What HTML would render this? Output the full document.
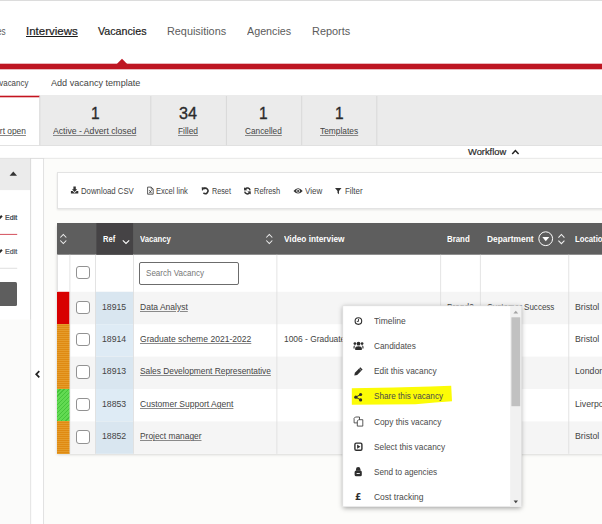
<!DOCTYPE html>
<html lang="en"><head><meta charset="utf-8"><title>Vacancies</title><style>
html,body{margin:0;padding:0;}
body{width:602px;height:524px;overflow:hidden;position:relative;background:#fff;font-family:"Liberation Sans",sans-serif;}
.a{position:absolute;}
.t{position:absolute;white-space:pre;line-height:1;transform-origin:0 0;}
svg{position:absolute;overflow:visible;}
</style></head>
<body>
<svg style="left:0;top:0" width="602" height="524"><rect x="0" y="0" width="602" height="1" fill="#dcdcdc"/><rect x="0" y="63.7" width="602" height="5.6" fill="#be1622"/><polygon points="116.8,64 122,58.8 127.2,64" fill="#be1622"/><rect x="0" y="95" width="602" height="50.5" fill="#ebebeb"/><rect x="0" y="95" width="39.4" height="50.5" fill="#fff"/><rect x="0" y="145.1" width="602" height="0.8" fill="#dcdcdc"/><rect x="0" y="95.7" width="39.7" height="1.6" fill="#c4141f"/><rect x="39.4" y="96" width="0.9" height="49.2" fill="#d6d6d6"/><rect x="150.4" y="96" width="0.9" height="49.2" fill="#d6d6d6"/><rect x="225.9" y="96" width="0.9" height="49.2" fill="#d6d6d6"/><rect x="301.3" y="96" width="0.9" height="49.2" fill="#d6d6d6"/><rect x="376.4" y="96" width="0.9" height="49.2" fill="#d6d6d6"/><rect x="0" y="157.9" width="602" height="0.9" fill="#d9d9d9"/><rect x="0" y="158.6" width="30.5" height="31.5" fill="#ebebeb"/><rect x="30.2" y="158" width="0.9" height="366" fill="#d6d6d6"/><rect x="0" y="319.5" width="30.3" height="205" fill="#fbfbfa"/><rect x="43.3" y="158.6" width="0.9" height="366" fill="#d6d6d6"/><rect x="44.2" y="158.6" width="558" height="366" fill="#fcfcfa"/><polygon points="9.6,175.8 13.3,171.6 17,175.8" fill="#333"/><path d="M39.3 371.1 L36.2 374.2 L39.3 377.3" fill="none" stroke="#222" stroke-width="1.7"/><rect x="0" y="233.9" width="17.2" height="1" fill="#d4505c"/><rect x="0" y="267.8" width="17.2" height="0.9" fill="#dcdcdc"/></svg>
<div class="a" style="left:0px;top:282px;width:17.2px;height:24px;background:#5e5e5e;border-radius:0 1.5px 1.5px 0;"></div>
<div class="a" style="left:57.4px;top:172.2px;width:560px;height:36.9px;background:#fff;border:1px solid #e3e3e3;box-sizing:border-box;box-shadow:0 1px 2px rgba(0,0,0,0.10);"></div>
<div class="a" style="left:57px;top:223px;width:560px;height:230px;background:#fff;box-shadow:0 1.5px 3px rgba(0,0,0,0.18);"></div>
<svg style="left:0;top:0" width="602" height="524"><rect x="57" y="223" width="560" height="230.8" fill="#fff"/><rect x="57" y="223" width="560" height="31.7" fill="#5e5e5e"/><rect x="96.4" y="223" width="36.7" height="31.7" fill="#454345"/><rect x="57" y="291.8" width="560" height="32.4" fill="#f5f5f5"/><rect x="95.6" y="291.8" width="37.6" height="32.4" fill="#d9e6f0"/><rect x="95.6" y="324.2" width="37.6" height="32.4" fill="#deebf5"/><rect x="57" y="356.6" width="560" height="32.4" fill="#f5f5f5"/><rect x="95.6" y="356.6" width="37.6" height="32.4" fill="#d9e6f0"/><rect x="95.6" y="389.0" width="37.6" height="32.4" fill="#deebf5"/><rect x="57" y="421.4" width="560" height="32.4" fill="#f5f5f5"/><rect x="95.6" y="421.4" width="37.6" height="32.4" fill="#d9e6f0"/><rect x="57" y="291.8" width="12.5" height="32.4" fill="#d80000"/></svg>
<div class="a" style="left:57px;top:324.2px;width:12.5px;height:64.8px;background:repeating-linear-gradient(180deg,#e59c2b 0,#e59c2b 1px,#df8a12 1px,#df8a12 2px);"></div>
<div class="a" style="left:57px;top:389.0px;width:12.5px;height:32.4px;background:repeating-linear-gradient(135deg,#62da52 0,#62da52 2px,#45c43a 2px,#45c43a 2.9px);"></div>
<div class="a" style="left:57px;top:421.4px;width:12.5px;height:32.4px;background:repeating-linear-gradient(180deg,#e59c2b 0,#e59c2b 1px,#df8a12 1px,#df8a12 2px);"></div>
<svg style="left:0;top:0" width="602" height="524"><rect x="69.5" y="254.7" width="0.8" height="199.10000000000002" fill="#dddddd"/><rect x="95.2" y="254.7" width="0.8" height="199.10000000000002" fill="#dddddd"/><rect x="133.2" y="254.7" width="0.8" height="199.10000000000002" fill="#dddddd"/><rect x="276.5" y="254.7" width="0.8" height="199.10000000000002" fill="#dddddd"/><rect x="440.3" y="254.7" width="0.8" height="199.10000000000002" fill="#dddddd"/><rect x="479.9" y="254.7" width="0.8" height="199.10000000000002" fill="#dddddd"/><rect x="568.4" y="254.7" width="0.8" height="199.10000000000002" fill="#dddddd"/><rect x="57" y="254.7" width="0.8" height="37.10000000000001" fill="#dddddd"/></svg>
<div class="a" style="left:76px;top:265.9px;width:13.6px;height:13.6px;background:#fff;border:1.2px solid #929292;border-radius:3px;box-sizing:border-box;"></div>
<div class="a" style="left:76px;top:300.5px;width:13.6px;height:13.6px;background:#fff;border:1.2px solid #929292;border-radius:3px;box-sizing:border-box;"></div>
<div class="a" style="left:76px;top:332.9px;width:13.6px;height:13.6px;background:#fff;border:1.2px solid #929292;border-radius:3px;box-sizing:border-box;"></div>
<div class="a" style="left:76px;top:365.3px;width:13.6px;height:13.6px;background:#fff;border:1.2px solid #929292;border-radius:3px;box-sizing:border-box;"></div>
<div class="a" style="left:76px;top:397.7px;width:13.6px;height:13.6px;background:#fff;border:1.2px solid #929292;border-radius:3px;box-sizing:border-box;"></div>
<div class="a" style="left:76px;top:430.09999999999997px;width:13.6px;height:13.6px;background:#fff;border:1.2px solid #929292;border-radius:3px;box-sizing:border-box;"></div>
<div class="a" style="left:139px;top:262px;width:99.8px;height:23.2px;background:#fff;border:1.1px solid #6c6c6c;border-radius:2px;box-sizing:border-box;"></div>
<svg style="left:0;top:0" width="602" height="524"><path d="M60.3 237.5 L63.3 234.4 L66.3 237.5 M60.3 240.5 L63.3 243.6 L66.3 240.5" fill="none" stroke="#f0f0f0" stroke-width="1.05" stroke-linecap="butt" stroke-linejoin="miter"/><path d="M266.3 237.5 L269.3 234.4 L272.3 237.5 M266.3 240.5 L269.3 243.6 L272.3 240.5" fill="none" stroke="#f0f0f0" stroke-width="1.05" stroke-linecap="butt" stroke-linejoin="miter"/><path d="M558.4 237.6 L561.4 234.5 L564.4 237.6 M558.4 240.6 L561.4 243.7 L564.4 240.6" fill="none" stroke="#f0f0f0" stroke-width="1.05" stroke-linecap="butt" stroke-linejoin="miter"/><path d="M122.8 240.4 L126 243.5 L129.2 240.4" fill="none" stroke="#fff" stroke-width="1.05"/><circle cx="545.7" cy="238.7" r="6.9" fill="none" stroke="#fff" stroke-width="1"/><polygon points="542.3,237.1 549.3,237.1 545.8,241.2" fill="#fff"/><path d="M512.2 154 L515.4 150.6 L518.6 154" fill="none" stroke="#222" stroke-width="1.5"/><path d="M73.4 186.6h2.4v2.6h1.5l-2.7 2.8l-2.7-2.8h1.5z M70.9 191h1.7l2 1.9l2-1.9h1.7v2.4h-7.4z" fill="#333"/><path d="M147.6 187.1h3.6l2 2v5.1h-5.6z" fill="none" stroke="#333" stroke-width="0.8"/><path d="M151.2 187.1v2h2" fill="none" stroke="#333" stroke-width="0.6"/><path d="M149.2 190.2l2.4 3M151.6 190.2l-2.4 3" stroke="#333" stroke-width="0.85"/><path d="M203.5 188.9 A2.7 2.7 0 1 1 203.4 192.9" fill="none" stroke="#333" stroke-width="1.5"/><polygon points="201.7,187.2 205.4,187.4 202,190.9" fill="#333"/><path d="M250.1 190.3 A2.75 2.75 0 0 0 245.2 189.1 M244.7 191.6 A2.75 2.75 0 0 0 249.6 192.8" fill="none" stroke="#333" stroke-width="1.5"/><polygon points="244,187.2 244.1,190.6 247.4,190.3" fill="#333"/><polygon points="250.8,194.6 250.7,191.3 247.4,191.6" fill="#333"/><path d="M293.5 190.9 Q298.1 185.6 302.7 190.9 Q298.1 196.2 293.5 190.9Z" fill="#333"/><circle cx="298.1" cy="190.8" r="1.9" fill="#eee"/><circle cx="298.1" cy="190.9" r="1" fill="#333"/><path d="M335 188h6.5l-2.5 2.9v3.4l-1.5-1.2v-2.2z" fill="#333"/><path d="M-1.2 219.0 L1.9 215.7" stroke="#2a2a2a" stroke-width="2.1" fill="none"/><path d="M-1.2 253.0 L1.9 249.7" stroke="#2a2a2a" stroke-width="2.1" fill="none"/></svg>
<span class="t" style="left:-3.12px;top:25.99px;font-size:11px;color:#5c5c5c;transform:scaleX(0.7500);">es</span>
<span class="t" style="left:25.90px;top:25.99px;font-size:11px;color:#1c1c1c;transform:scaleX(1.0458);-webkit-text-stroke:0.2px #1c1c1c;text-decoration:underline;">Interviews</span>
<span class="t" style="left:97.70px;top:25.99px;font-size:11px;color:#1c1c1c;transform:scaleX(0.9712);-webkit-text-stroke:0.2px #1c1c1c;">Vacancies</span>
<span class="t" style="left:167.30px;top:25.99px;font-size:11px;color:#5c5c5c;transform:scaleX(0.9863);">Requisitions</span>
<span class="t" style="left:247.00px;top:25.99px;font-size:11px;color:#5c5c5c;transform:scaleX(0.9765);">Agencies</span>
<span class="t" style="left:312.20px;top:25.99px;font-size:11px;color:#5c5c5c;transform:scaleX(0.9914);">Reports</span>
<span class="t" style="left:-16.75px;top:78.98px;font-size:9px;color:#444;transform:scaleX(0.8800);">Add vacancy</span>
<span class="t" style="left:50.80px;top:78.98px;font-size:9px;color:#444;transform:scaleX(1.0095);">Add vacancy template</span>
<span class="t" style="left:-48.71px;top:126.88px;font-size:9px;color:#444;transform:scaleX(0.9300);text-decoration:underline;text-decoration-color:#888;">Active - Advert open</span>
<span class="t" style="left:90.70px;top:105.40px;font-size:16.3px;color:#2b2b2b;transform:scaleX(0.9500);-webkit-text-stroke:0.35px #2b2b2b;">1</span>
<span class="t" style="left:53.20px;top:126.88px;font-size:9px;color:#444;transform:scaleX(0.9625);text-decoration:underline;text-decoration-color:#888;">Active - Advert closed</span>
<span class="t" style="left:178.70px;top:105.40px;font-size:16.3px;color:#2b2b2b;transform:scaleX(0.9931);-webkit-text-stroke:0.35px #2b2b2b;">34</span>
<span class="t" style="left:178.00px;top:126.88px;font-size:9px;color:#444;transform:scaleX(0.9296);text-decoration:underline;text-decoration-color:#888;">Filled</span>
<span class="t" style="left:258.80px;top:105.40px;font-size:16.3px;color:#2b2b2b;transform:scaleX(0.9500);-webkit-text-stroke:0.35px #2b2b2b;">1</span>
<span class="t" style="left:244.90px;top:126.88px;font-size:9px;color:#444;transform:scaleX(0.9193);text-decoration:underline;text-decoration-color:#888;">Cancelled</span>
<span class="t" style="left:334.60px;top:105.40px;font-size:16.3px;color:#2b2b2b;transform:scaleX(0.9500);-webkit-text-stroke:0.35px #2b2b2b;">1</span>
<span class="t" style="left:319.60px;top:126.88px;font-size:9px;color:#444;transform:scaleX(0.9310);text-decoration:underline;text-decoration-color:#888;">Templates</span>
<span class="t" style="left:468.40px;top:148.38px;font-size:9px;color:#2a2a2a;transform:scaleX(1.0368);-webkit-text-stroke:0.2px #2a2a2a;">Workflow</span>
<span class="t" style="left:80.90px;top:187.40px;font-size:8.5px;color:#444;transform:scaleX(0.9160);">Download CSV</span>
<span class="t" style="left:156.30px;top:187.40px;font-size:8.5px;color:#444;transform:scaleX(0.8884);">Excel link</span>
<span class="t" style="left:211.50px;top:187.40px;font-size:8.5px;color:#444;transform:scaleX(0.8506);">Reset</span>
<span class="t" style="left:253.60px;top:187.40px;font-size:8.5px;color:#444;transform:scaleX(0.8802);">Refresh</span>
<span class="t" style="left:304.80px;top:187.40px;font-size:8.5px;color:#444;transform:scaleX(0.9409);">View</span>
<span class="t" style="left:344.60px;top:187.40px;font-size:8.5px;color:#444;transform:scaleX(0.9317);">Filter</span>
<span class="t" style="left:4.70px;top:214.07px;font-size:7.6px;color:#2d3540;transform:scaleX(0.9317);-webkit-text-stroke:0.2px #2d3540;">Edit</span>
<span class="t" style="left:4.70px;top:248.07px;font-size:7.6px;color:#4a5058;transform:scaleX(0.9317);-webkit-text-stroke:0.2px #4a5058;">Edit</span>
<span class="t" style="left:103.20px;top:235.38px;font-size:9px;color:#fff;transform:scaleX(0.8405);font-weight:700;">Ref</span>
<span class="t" style="left:140.40px;top:235.38px;font-size:9px;color:#fff;transform:scaleX(0.8576);font-weight:700;">Vacancy</span>
<span class="t" style="left:283.80px;top:235.38px;font-size:9px;color:#fff;transform:scaleX(0.9186);font-weight:700;">Video interview</span>
<span class="t" style="left:447.20px;top:235.38px;font-size:9px;color:#fff;transform:scaleX(0.8726);font-weight:700;">Brand</span>
<span class="t" style="left:487.10px;top:235.38px;font-size:9px;color:#fff;transform:scaleX(0.9317);font-weight:700;">Department</span>
<span class="t" style="left:575.40px;top:235.38px;font-size:9px;color:#fff;transform:scaleX(0.8600);font-weight:700;">Location</span>
<span class="t" style="left:145.70px;top:268.98px;font-size:9px;color:#777;transform:scaleX(0.8956);">Search Vacancy</span>
<span class="t" style="left:102.30px;top:302.83px;font-size:9.3px;color:#444;transform:scaleX(0.9358);">18915</span>
<span class="t" style="left:139.50px;top:302.83px;font-size:9.3px;color:#444;transform:scaleX(0.9157);text-decoration:underline;text-decoration-color:#8a8a8a;">Data Analyst</span>
<span class="t" style="left:574.80px;top:302.83px;font-size:9.3px;color:#444;transform:scaleX(0.9400);">Bristol</span>
<span class="t" style="left:102.30px;top:335.23px;font-size:9.3px;color:#444;transform:scaleX(0.9358);">18914</span>
<span class="t" style="left:139.50px;top:335.23px;font-size:9.3px;color:#444;transform:scaleX(0.9202);text-decoration:underline;text-decoration-color:#8a8a8a;">Graduate scheme 2021-2022</span>
<span class="t" style="left:574.80px;top:335.23px;font-size:9.3px;color:#444;transform:scaleX(0.9400);">Bristol</span>
<span class="t" style="left:102.30px;top:366.63px;font-size:9.3px;color:#444;transform:scaleX(0.9358);">18913</span>
<span class="t" style="left:139.50px;top:366.63px;font-size:9.3px;color:#444;transform:scaleX(0.8982);text-decoration:underline;text-decoration-color:#8a8a8a;">Sales Development Representative</span>
<span class="t" style="left:574.80px;top:366.63px;font-size:9.3px;color:#444;transform:scaleX(0.9400);">London</span>
<span class="t" style="left:102.30px;top:400.03px;font-size:9.3px;color:#444;transform:scaleX(0.9358);">18853</span>
<span class="t" style="left:139.50px;top:400.03px;font-size:9.3px;color:#444;transform:scaleX(0.9174);text-decoration:underline;text-decoration-color:#8a8a8a;">Customer Support Agent</span>
<span class="t" style="left:574.80px;top:400.03px;font-size:9.3px;color:#444;transform:scaleX(0.9400);">Liverpool</span>
<span class="t" style="left:102.30px;top:432.43px;font-size:9.3px;color:#444;transform:scaleX(0.9358);">18852</span>
<span class="t" style="left:139.50px;top:432.43px;font-size:9.3px;color:#444;transform:scaleX(0.9015);text-decoration:underline;text-decoration-color:#8a8a8a;">Project manager</span>
<span class="t" style="left:574.80px;top:432.43px;font-size:9.3px;color:#444;transform:scaleX(0.9400);">Bristol</span>
<span class="t" style="left:283.70px;top:335.23px;font-size:9.3px;color:#444;transform:scaleX(0.9050);">1006 - Graduate</span>
<span class="t" style="left:447.20px;top:302.83px;font-size:9.3px;color:#444;transform:scaleX(0.8938);">Brand2</span>
<span class="t" style="left:487.10px;top:302.83px;font-size:9.3px;color:#444;transform:scaleX(0.8638);">Customer Success</span>
<div class="a" style="left:343px;top:306px;width:178px;height:201px;background:#fff;box-shadow:0 1px 5px rgba(0,0,0,0.38);"></div>
<svg style="left:0;top:0" width="602" height="524"><rect x="342.6" y="305.6" width="178.9" height="201.3" fill="#fff"/><rect x="342.85" y="305.85" width="178.4" height="200.8" fill="none" stroke="#d4d4d4" stroke-width="0.5"/><rect x="510.2" y="306" width="11" height="200.6" fill="#f1f1f1"/><rect x="511.4" y="317.3" width="8.8" height="88.9" fill="#c1c1c1"/><polygon points="513.4,313.6 518.2,313.6 515.8,310.8" fill="#a3a3a3"/><polygon points="513.6,500.6 518,500.6 515.8,503.2" fill="#444"/><path d="M351.8 388.2 L394 387.5 L430.7 386.6 L451.2 385.8 L452 401.3 L435 402.4 L415.6 404.3 L351.8 404.8 Z" fill="#fcfc06"/><circle cx="358.4" cy="321.1" r="3.3" fill="none" stroke="#2e2e2e" stroke-width="1.1"/><path d="M358.5 318.9V321.4H356.8" fill="none" stroke="#2e2e2e" stroke-width="0.9"/><circle cx="358.5" cy="343.7" r="1.9" fill="#2e2e2e"/><path d="M355.2 350v-1.7q0-2.1 3.3-2.1t3.3 2.1v1.7z" fill="#2e2e2e"/><circle cx="354.9" cy="343.6" r="1.35" fill="#2e2e2e"/><circle cx="362.1" cy="343.6" r="1.35" fill="#2e2e2e"/><path d="M353.5 348.4v-1.6q0-1.5 2-1.4l-0.9 1.2v1.8z M363.5 348.4v-1.6q0-1.5-2-1.4l0.9 1.2v1.8z" fill="#2e2e2e"/><path d="M354.3 375.4 L354.9 372.7 L360.3 367.3 L362.6 369.6 L357.2 375 Z" fill="#2e2e2e"/><path d="M359.2 368.5 L361.5 370.8" stroke="#fff" stroke-width="0.5"/><circle cx="360.6" cy="394.5" r="1.6" fill="#2e2e2e"/><circle cx="360.6" cy="399.9" r="1.6" fill="#2e2e2e"/><circle cx="355.8" cy="397.2" r="1.6" fill="#2e2e2e"/><path d="M360.6 394.5L355.8 397.2L360.6 399.9" fill="none" stroke="#2e2e2e" stroke-width="1"/><path d="M355.4 417h4.1v5.9h-5.4v-4.6z" fill="none" stroke="#3c3c3c" stroke-width="0.85"/><path d="M358.6 419.7h4.2v6.4h-5.5v-5.1z" fill="#fff" stroke="#3c3c3c" stroke-width="0.85"/><rect x="354.9" y="443.1" width="7" height="7.2" rx="1.3" fill="none" stroke="#2e2e2e" stroke-width="1.4"/><polygon points="357.1,444.6 360.4,446.7 357.1,448.8" fill="#2e2e2e"/><path d="M356 470.8v-1.6a2.2 2.2 0 0 1 4.4 0v1.6z" fill="#2e2e2e"/><rect x="354.6" y="470.4" width="7.2" height="5.8" rx="1.5" fill="#2e2e2e"/><path d="M356.6 473.5h3.2" stroke="#fff" stroke-width="0.9"/></svg>
<span class="t" style="left:373.90px;top:317.48px;font-size:9px;color:#4a4a4a;transform:scaleX(0.9440);">Timeline</span>
<span class="t" style="left:373.90px;top:341.68px;font-size:9px;color:#4a4a4a;transform:scaleX(0.9177);">Candidates</span>
<span class="t" style="left:373.90px;top:366.78px;font-size:9px;color:#4a4a4a;transform:scaleX(0.9285);">Edit this vacancy</span>
<span class="t" style="left:373.90px;top:391.78px;font-size:9px;color:#4a4a4a;transform:scaleX(0.9087);">Share this vacancy</span>
<span class="t" style="left:373.90px;top:418.18px;font-size:9px;color:#4a4a4a;transform:scaleX(0.9227);">Copy this vacancy</span>
<span class="t" style="left:373.90px;top:442.98px;font-size:9px;color:#4a4a4a;transform:scaleX(0.9228);">Select this vacancy</span>
<span class="t" style="left:373.90px;top:468.18px;font-size:9px;color:#4a4a4a;transform:scaleX(0.9071);">Send to agencies</span>
<span class="t" style="left:373.90px;top:493.38px;font-size:9px;color:#4a4a4a;transform:scaleX(0.9423);">Cost tracking</span>
<span class="t" style="left:355px;top:492.4px;font-size:9.5px;font-weight:700;font-family:'DejaVu Sans','Liberation Sans',sans-serif;color:#2e2e2e;transform:scaleX(0.95)">£</span>
</body></html>
